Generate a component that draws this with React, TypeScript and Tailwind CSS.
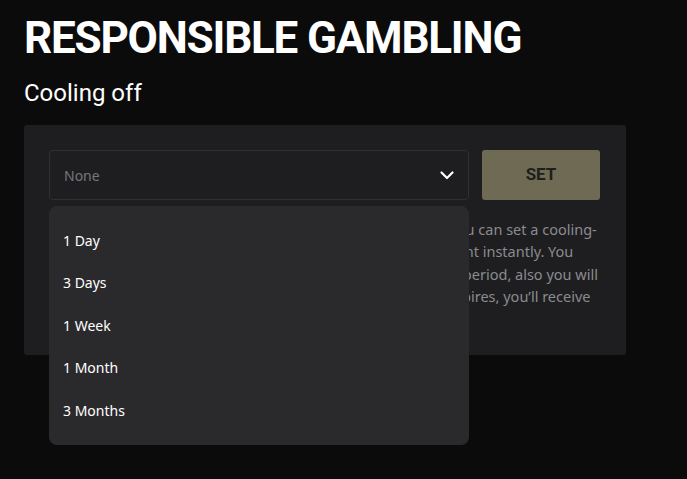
import { useState } from "react"

const options = ["1 Day", "3 Days", "1 Week", "1 Month", "3 Months"]

const lines = [
    "If you need to take a break from gambling on our website, you can set a cooling-",
    "off period. The restriction will be applied to your whole account instantly. You",
    "won’t be able to deposit or place any bets during the chosen period, also you will",
    "not be able to cancel it earlier. Once the cooling-off period expires, you’ll receive",
    "an email notification.",
]

export default function App() {
    const [open] = useState(true)

    return (
        <div className="min-h-[479px] bg-[#0b0b0c] px-6 pt-[14px] text-white" style={{ fontFamily: "Roboto, 'Noto Sans', sans-serif" }}>
            <h1 className="text-[44px] font-bold leading-[48px] tracking-[-1.2px]">RESPONSIBLE GAMBLING</h1>
            <h2 className="mt-[16px] text-[24px] leading-[30px]">Cooling off</h2>

            <div className="mt-[17px] w-[602px] rounded-[3px] bg-[#1e1e21] px-[25px] pt-[25px] pb-[26px]">
                <div className="flex gap-[13px]">
                    <div className="relative w-[420px]">
                        <div className="flex h-[50px] items-center justify-between rounded-[4px] border border-[#2f2f34] px-[14px]">
                            <span className="font-['Noto_Sans'] text-[14px] text-[#76767b]">None</span>
                            <svg width="14" height="9" viewBox="0 0 14 9" fill="none">
                                <path d="M1.5 1.5L7 7L12.5 1.5" stroke="#fff" strokeWidth="2.2" strokeLinecap="round" strokeLinejoin="round" />
                            </svg>
                        </div>

                        {open && (
                            <div className="absolute top-[56px] left-0 z-10 w-[420px] rounded-[8px] bg-[#2a2a2d] py-[13px]">
                                {options.map((item) => (
                                    <div key={item} className="flex h-[42.5px] items-center px-[14px] font-['Noto_Sans'] text-[14px] text-white">
                                        {item}
                                    </div>
                                ))}
                            </div>
                        )}
                    </div>
                    <button className="h-[50px] w-[118px] rounded-[3px] bg-[#6f6a54] text-[17px] font-bold text-[#1e1e1e]">SET</button>
                </div>

                <p className="mt-[18px] font-['Noto_Sans'] text-[14.5px] leading-[22.3px] whitespace-nowrap text-[#8b8b8e]">
                    {lines.map((line) => (
                        <span key={line} className="block">{line}</span>
                    ))}
                </p>
            </div>
        </div>
    )
}
